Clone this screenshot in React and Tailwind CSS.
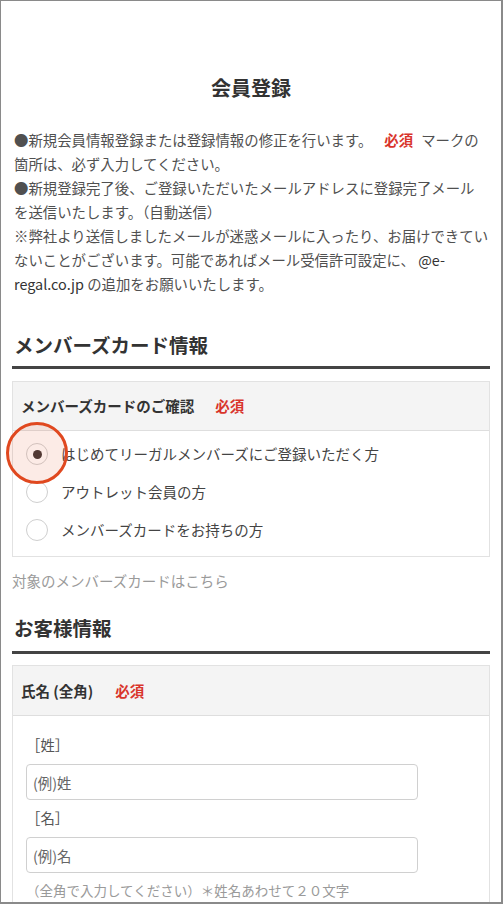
import React from "react";

const font = "font-['Noto_Sans_CJK_JP','Noto_Sans',sans-serif]";

function Req({ className = "" }) {
  return <span className={`text-[#d9342b] font-bold ${className}`}>必須</span>;
}

function Radio({ checked, label }) {
  return (
    <label className="flex items-center h-[38px] pl-[13px]">
      <span className="w-[22px] h-[22px] rounded-full border border-[#cfcfcf] bg-white flex items-center justify-center shrink-0">
        {checked && <span className="w-[9px] h-[9px] rounded-full bg-[#3a3030]" />}
      </span>
      <span className="ml-[13px] text-[14.5px] text-[#444] leading-[24px]">{label}</span>
    </label>
  );
}

export default function App() {
  return (
    <div
      className={`${font} relative w-[503px] h-[904px] overflow-hidden bg-white border-l border-t border-r-2 border-b-2 border-[#8a8a8a] pl-[11px] pr-[11px]`}
    >
      <h1 className="pt-[73px] text-center text-[20px] leading-[28px] font-bold text-[#333]">会員登録</h1>

      <div className="mt-[26px] pl-[2px] text-[14.4px] leading-[24px] text-[#505050] whitespace-nowrap">
        <div>
          ●新規会員情報登録または登録情報の修正を行います。<Req className="ml-[12px] mr-[8px]" />マークの
        </div>
        <div>箇所は、必ず入力してください。</div>
        <div>●新規登録完了後、ご登録いただいたメールアドレスに登録完了メール</div>
        <div>を送信いたします。（自動送信）</div>
        <div>※弊社より送信しましたメールが迷惑メールに入ったり、お届けできてい</div>
        <div>
          ないことがございます。可能であればメール受信許可設定に、 <span className="text-[#333]">@e-</span>
        </div>
        <div>
          <span className="text-[#333]">regal.co.jp</span> の追加をお願いいたします。
        </div>
      </div>

      <h2 className="mt-[35px] pl-[2px] pb-[7px] border-b-[3px] border-[#444] text-[19.5px] leading-[28px] font-bold text-[#333]">
        メンバーズカード情報
      </h2>

      <div className="mt-[12px] border border-[#e2e2e2]">
        <div className="h-[49px] flex items-center pl-[8px] bg-[#f4f4f4] border-b border-[#dedede]">
          <span className="text-[14.5px] font-bold text-[#333]">メンバーズカードのご確認</span>
          <Req className="ml-[21px] text-[14.5px]" />
        </div>
        <div className="pt-[4px] pb-[7px]">
          <Radio checked label="はじめてリーガルメンバーズにご登録いただく方" />
          <Radio label="アウトレット会員の方" />
          <Radio label="メンバーズカードをお持ちの方" />
        </div>
      </div>

      <p className="mt-[12px] text-[14.5px] leading-[24px] text-[#9a9a9a]">対象のメンバーズカードはこちら</p>

      <h2 className="mt-[21px] pl-[2px] pb-[9px] border-b-[3px] border-[#444] text-[19.5px] leading-[28px] font-bold text-[#333]">
        お客様情報
      </h2>

      <div className="mt-[11px] border border-[#e2e2e2]">
        <div className="h-[50px] flex items-center pl-[8px] bg-[#f4f4f4] border-b border-[#dedede]">
          <span className="text-[14.5px] font-bold text-[#333]">氏名 (全角)</span>
          <Req className="ml-[22px] text-[14.5px]" />
        </div>
        <div className="pl-[13px] pt-[17px] pb-[20px]">
          <div className="text-[14.4px] leading-[24px] text-[#555]">［姓］</div>
          <input
            className="mt-[7px] block w-[392px] h-[36px] border border-[#d0d0d0] rounded-[4px] px-[6px] text-[14.4px] text-[#333] placeholder:text-[#666] outline-none"
            placeholder="(例)姓"
          />
          <div className="mt-[6px] text-[14.4px] leading-[24px] text-[#555]">［名］</div>
          <input
            className="mt-[7px] block w-[392px] h-[36px] border border-[#d0d0d0] rounded-[4px] px-[6px] text-[14.4px] text-[#333] placeholder:text-[#666] outline-none"
            placeholder="(例)名"
          />
          <div className="mt-[5px] text-[13.5px] leading-[24px] text-[#9a9a9a] whitespace-nowrap">
            （全角で入力してください）＊姓名あわせて２０文字
          </div>
        </div>
      </div>

      <div className="absolute top-[421px] left-[5px] w-[62px] h-[62px] rounded-full border-[3px] border-[#e0481f] bg-[rgba(235,110,80,0.14)] pointer-events-none" />
    </div>
  );
}
